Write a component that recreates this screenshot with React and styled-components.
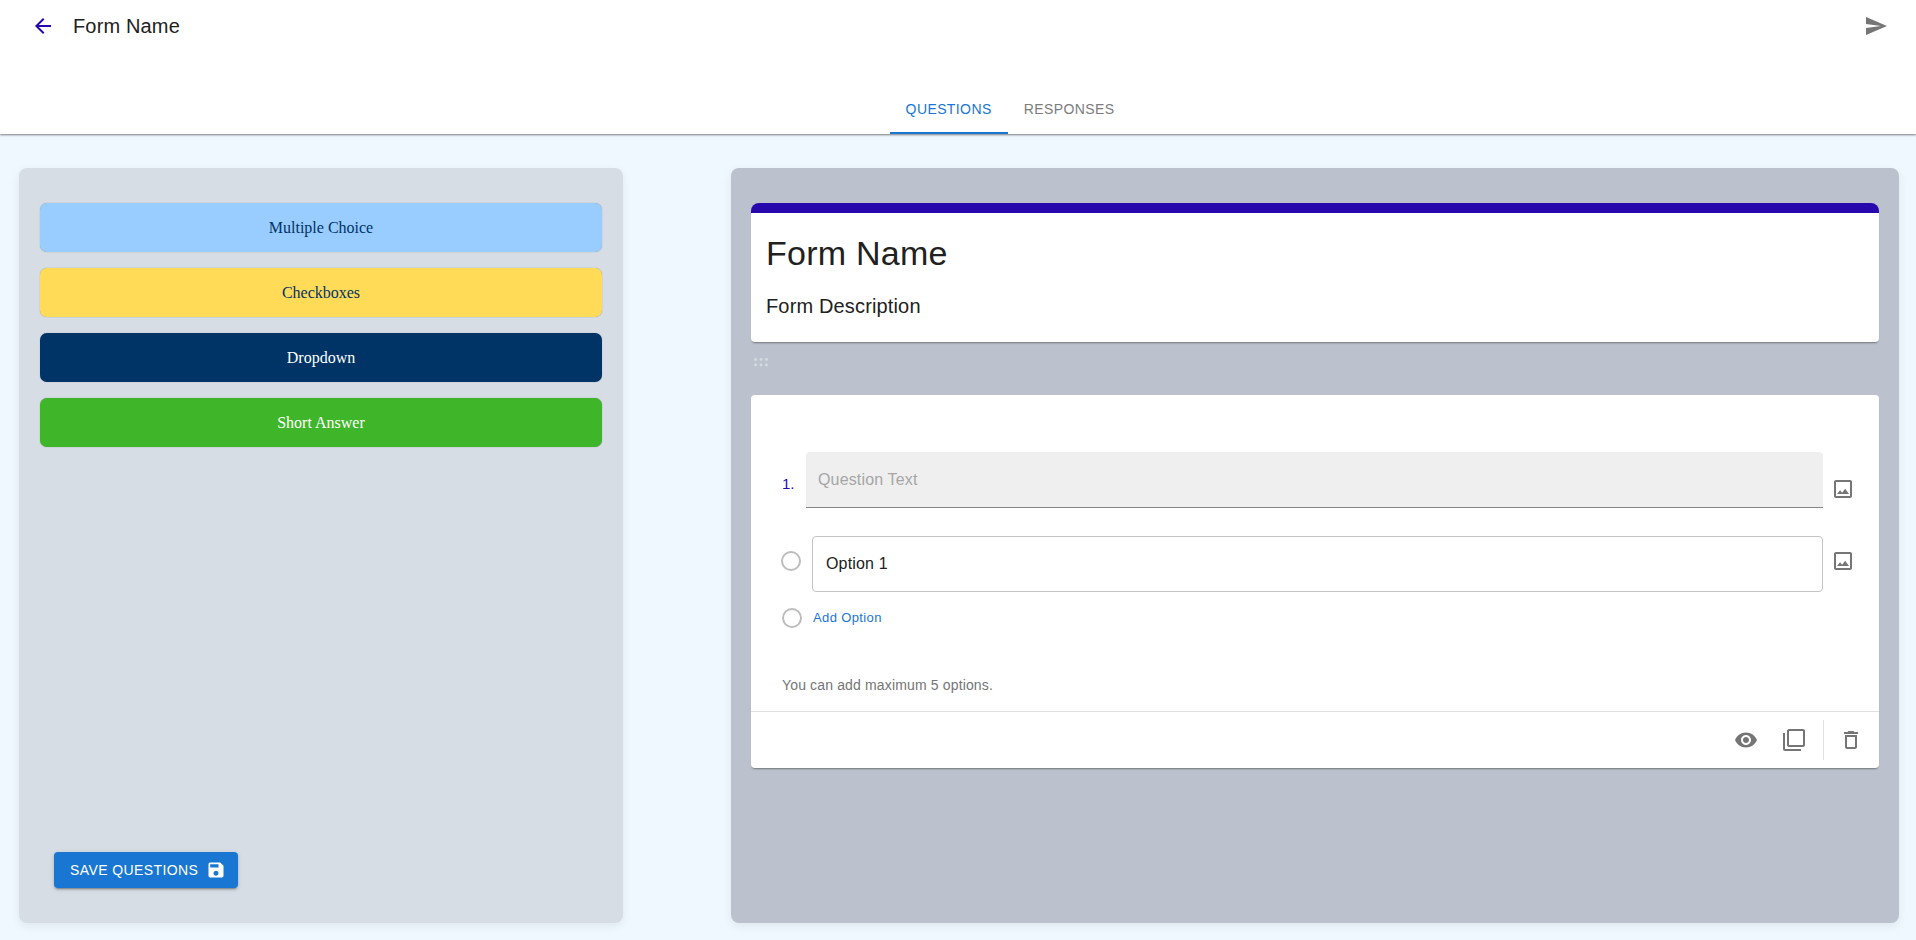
import styled, { createGlobalStyle } from "styled-components";

const GlobalStyle = createGlobalStyle`
  html, body {
    margin: 0;
    padding: 0;
    background: #eff7ff;
    font-family: "Liberation Sans", Arial, sans-serif;
  }
  * { box-sizing: border-box; }
`;

const Page = styled.div`
  display: flex;
  flex-direction: column;
  height: 940px;
  overflow: hidden;
`;

const Header = styled.header`
  display: flex;
  flex-direction: column;
  justify-content: space-between;
  height: 134px;
  background: #fff;
  box-shadow: 0 1px 2px rgba(0, 0, 0, 0.5);
  position: relative;
`;

const TopRow = styled.div`
  display: flex;
  align-items: center;
  height: 52px;
  padding: 0 28px 0 31px;
  gap: 18px;
`;

const PageTitle = styled.div`
  flex: 1;
  font-size: 20px;
  letter-spacing: 0.15px;
  color: #212121;
`;

const Tabs = styled.nav`
  display: flex;
  justify-content: center;
  padding-left: 104px;
`;

const Tab = styled.div`
  height: 48px;
  padding: 0 16px;
  display: flex;
  align-items: center;
  font-size: 14px;
  letter-spacing: 0.4px;
  text-transform: uppercase;
  color: ${(p) => (p.$active ? "#1976d2" : "#7c7c7c")};
  border-bottom: 2px solid ${(p) => (p.$active ? "#1976d2" : "transparent")};
`;

const Main = styled.main`
  flex: 1;
  display: flex;
  justify-content: space-between;
  padding: 34px 17px 17px 19px;
  min-height: 0;
`;

const ToolPanel = styled.aside`
  width: 604px;
  display: flex;
  flex-direction: column;
  justify-content: space-between;
  padding: 35px 21px 35px 21px;
  background: #d6dde5;
  border-radius: 8px;
  box-shadow: 0 3px 10px rgba(0, 0, 0, 0.07);
`;

const TypeList = styled.div`
  display: flex;
  flex-direction: column;
  gap: 16px;
`;

const TypeButton = styled.button`
  height: 49px;
  border: none;
  border-radius: 7px;
  background: ${(p) => p.$bg};
  box-shadow: 0 0 1px rgba(110, 110, 110, 0.7);
  color: ${(p) => p.$fg};
  font-family: "Liberation Serif", serif;
  font-size: 16px;
`;

const SaveButton = styled.button`
  align-self: flex-start;
  margin-left: 14px;
  width: 184px;
  height: 36px;
  padding: 0 12px 0 16px;
  display: flex;
  align-items: center;
  justify-content: space-between;
  border: none;
  border-radius: 4px;
  background: #1976d2;
  color: #fff;
  font-family: "Liberation Sans", sans-serif;
  font-size: 14px;
  letter-spacing: 0.4px;
  text-transform: uppercase;
  box-shadow: 0 3px 1px -2px rgba(0, 0, 0, 0.2), 0 2px 2px rgba(0, 0, 0, 0.14), 0 1px 5px rgba(0, 0, 0, 0.12);
`;

const Canvas = styled.section`
  width: 1168px;
  padding: 35px 20px;
  background: #bbc2cd;
  border-radius: 8px;
  box-shadow: 0 3px 10px rgba(0, 0, 0, 0.07);
`;

const FormCard = styled.div`
  height: 139px;
  padding: 0 15px;
  background: #fff;
  border-top: 10px solid #2708ac;
  border-radius: 8px 8px 4px 4px;
  box-shadow: 0 2px 2px -1px rgba(0, 0, 0, 0.4);
`;

const FormName = styled.div`
  margin-top: 16px;
  font-size: 34px;
  line-height: 48px;
  letter-spacing: 0.25px;
  color: #212121;
`;

const FormDescription = styled.div`
  margin-top: 17px;
  font-size: 20px;
  line-height: 24px;
  letter-spacing: 0.15px;
  color: #212121;
`;

const DragHandle = styled.div`
  height: 53px;
  padding: 16px 0 0 3px;
  display: flex;
  align-items: flex-start;
`;

const QuestionCard = styled.div`
  height: 373px;
  padding-top: 57px;
  background: #fff;
  border-radius: 4px;
  box-shadow: 0 2px 2px -1px rgba(0, 0, 0, 0.4);
`;

const QuestionRow = styled.div`
  display: flex;
  align-items: flex-start;
  padding-left: 31px;
`;

const QuestionNumber = styled.div`
  width: 24px;
  padding-top: 22px;
  font-size: 15px;
  line-height: 20px;
  color: #2708ac;
`;

const QuestionInput = styled.div`
  width: 1017px;
  height: 56px;
  padding: 0 12px;
  display: flex;
  align-items: center;
  font-size: 16px;
  letter-spacing: 0.15px;
  color: #a6a6a6;
  background: #efefef;
  border-bottom: 1px solid #858585;
  border-radius: 4px 4px 0 0;
`;

const SideIcon = styled.div`
  margin: ${(p) => p.$top}px 0 0 8px;
  height: 24px;
`;

const OptionRow = styled.div`
  display: flex;
  align-items: flex-start;
  padding-left: 30px;
  margin-top: 28px;
`;

const Radio = styled.span`
  flex: none;
  width: 20px;
  height: 20px;
  border: 2px solid #bdbdbd;
  border-radius: 50%;
`;

const OptionRadio = styled(Radio)`
  margin-top: 15px;
`;

const OptionInput = styled.div`
  width: 1011px;
  height: 56px;
  margin-left: 11px;
  padding: 0 13px;
  display: flex;
  align-items: center;
  font-size: 16px;
  letter-spacing: 0.15px;
  color: #212121;
  border: 1px solid #c4c4c4;
  border-radius: 4px;
`;

const AddRow = styled.div`
  display: flex;
  align-items: center;
  gap: 11px;
  padding-left: 31px;
  margin-top: 16px;
`;

const AddLink = styled.span`
  font-size: 13px;
  letter-spacing: 0.37px;
  margin-top: -2px;
  color: #1976d2;
`;

const Hint = styled.div`
  margin-top: 47px;
  padding-left: 31px;
  font-size: 14px;
  line-height: 20px;
  letter-spacing: 0.15px;
  color: #757575;
`;

const CardFooter = styled.div`
  height: 57px;
  margin-top: 16px;
  padding-right: 16px;
  display: flex;
  align-items: center;
  justify-content: flex-end;
  border-top: 1px solid #e0e0e0;
`;

const FooterAction = styled.span`
  height: 24px;
  margin-right: ${(p) => p.$gap || 0}px;
`;

const FooterDivider = styled.span`
  width: 1px;
  height: 40px;
  margin-right: 15px;
  background: #e0e0e0;
`;

const Icon = ({ d, size = 24, color = "#757575" }) => (
  <svg width={size} height={size} viewBox="0 0 24 24" fill={color} style={{ display: "block" }}>
    <path d={d} />
  </svg>
);

const ICONS = {
  back: "M20 11H7.83l5.59-5.59L12 4l-8 8 8 8 1.41-1.41L7.83 13H20v-2z",
  send: "M2.01 21 23 12 2.01 3 2 10l15 2-15 2z",
  image: "M19 5v14H5V5h14m0-2H5c-1.1 0-2 .9-2 2v14c0 1.1.9 2 2 2h14c1.1 0 2-.9 2-2V5c0-1.1-.9-2-2-2zm-4.86 8.86l-3 3.87L9 13.14 6 17h12l-3.86-5.14z",
  eye: "M12 4.5C7 4.5 2.73 7.61 1 12c1.73 4.39 6 7.5 11 7.5s9.27-3.11 11-7.5c-1.73-4.39-6-7.5-11-7.5zM12 17c-2.76 0-5-2.24-5-5s2.24-5 5-5 5 2.24 5 5-2.24 5-5 5zm0-8c-1.66 0-3 1.34-3 3s1.34 3 3 3 3-1.34 3-3-1.34-3-3-3z",
  copy: "M3 5H1v16c0 1.1.9 2 2 2h16v-2H3V5zm18-4H7c-1.1 0-2 .9-2 2v14c0 1.1.9 2 2 2h14c1.1 0 2-.9 2-2V3c0-1.1-.9-2-2-2zm0 16H7V3h14v14z",
  trash: "M6 19c0 1.1.9 2 2 2h8c1.1 0 2-.9 2-2V7H6v12zM8 9h8v10H8V9zm7.5-5l-1-1h-5l-1 1H5v2h14V4z",
  save: "M17 3H5c-1.11 0-2 .9-2 2v14c0 1.1.89 2 2 2h14c1.1 0 2-.9 2-2V7l-4-4zm-5 16c-1.66 0-3-1.34-3-3s1.34-3 3-3 3 1.34 3 3-1.34 3-3 3zm3-10H5V5h10v4z",
};

const DragDots = () => (
  <svg width="14" height="9" viewBox="0 0 14 9" fill="#d6dbe2" style={{ display: "block" }}>
    {[1.5, 7, 12.5].map((x) =>
      [1.5, 7].map((y) => <circle key={`${x}-${y}`} cx={x} cy={y} r="1.4" />)
    )}
  </svg>
);

const questionTypes = [
  { label: "Multiple Choice", bg: "#99ccff", fg: "#003366" },
  { label: "Checkboxes", bg: "#ffdb58", fg: "#003366" },
  { label: "Dropdown", bg: "#003366", fg: "#ffffff" },
  { label: "Short Answer", bg: "#3fb52a", fg: "#ffffff" },
];

const App = () => {
  return (
    <Page>
      <GlobalStyle />
      <Header>
        <TopRow>
          <Icon d={ICONS.back} color="#2708ac" />
          <PageTitle>Form Name</PageTitle>
          <Icon d={ICONS.send} />
        </TopRow>
        <Tabs>
          <Tab $active>Questions</Tab>
          <Tab>Responses</Tab>
        </Tabs>
      </Header>

      <Main>
        <ToolPanel>
          <TypeList>
            {questionTypes.map((t) => (
              <TypeButton key={t.label} $bg={t.bg} $fg={t.fg}>
                {t.label}
              </TypeButton>
            ))}
          </TypeList>
          <SaveButton>
            Save Questions
            <Icon d={ICONS.save} size={20} color="#fff" />
          </SaveButton>
        </ToolPanel>

        <Canvas>
          <FormCard>
            <FormName>Form Name</FormName>
            <FormDescription>Form Description</FormDescription>
          </FormCard>
          <DragHandle>
            <DragDots />
          </DragHandle>
          <QuestionCard>
            <QuestionRow>
              <QuestionNumber>1.</QuestionNumber>
              <QuestionInput>Question Text</QuestionInput>
              <SideIcon $top={25}>
                <Icon d={ICONS.image} />
              </SideIcon>
            </QuestionRow>
            <OptionRow>
              <OptionRadio />
              <OptionInput>Option 1</OptionInput>
              <SideIcon $top={13}>
                <Icon d={ICONS.image} />
              </SideIcon>
            </OptionRow>
            <AddRow>
              <Radio />
              <AddLink>Add Option</AddLink>
            </AddRow>
            <Hint>You can add maximum 5 options.</Hint>
            <CardFooter>
              <FooterAction $gap={24}>
                <Icon d={ICONS.eye} />
              </FooterAction>
              <FooterAction $gap={17}>
                <Icon d={ICONS.copy} />
              </FooterAction>
              <FooterDivider />
              <FooterAction>
                <Icon d={ICONS.trash} />
              </FooterAction>
            </CardFooter>
          </QuestionCard>
        </Canvas>
      </Main>
    </Page>
  );
};

export default App;
